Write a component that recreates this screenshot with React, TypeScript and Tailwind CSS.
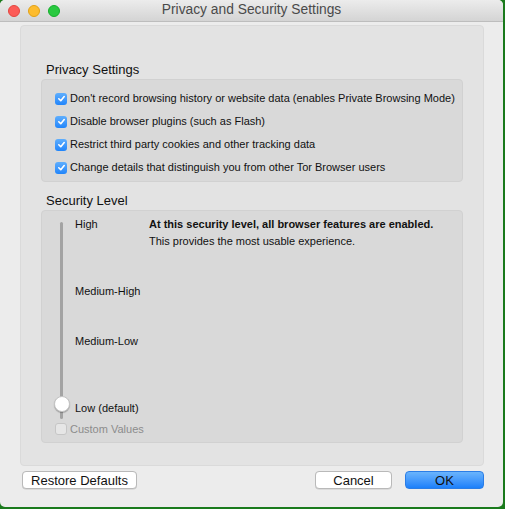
import React from 'react';

const font = { fontFamily: '"Liberation Sans", Arial, sans-serif' };

const Check = ({ checked, disabled }: { checked?: boolean; disabled?: boolean }) =>
  checked ? (
    <span className="w-[12px] h-[12px] rounded-[3px] bg-gradient-to-b from-[#5eaefd] to-[#1f85fb] flex items-center justify-center shrink-0">
      <svg width="9" height="9" viewBox="0 0 10 10">
        <path d="M2 5.3 L4.2 7.4 L8 2.8" fill="none" stroke="white" strokeWidth={1.8} strokeLinecap="round" strokeLinejoin="round" />
      </svg>
    </span>
  ) : (
    <span
      className={`w-[12px] h-[12px] rounded-[3px] border shrink-0 ${
        disabled ? 'border-[#c6c6c6] bg-[#e6e6e6]' : 'border-[#aaa] bg-white'
      }`}
    />
  );

const privacyItems = [
  "Don't record browsing history or website data (enables Private Browsing Mode)",
  'Disable browser plugins (such as Flash)',
  'Restrict third party cookies and other tracking data',
  'Change details that distinguish you from other Tor Browser users',
];

const MacButton = ({ label, primary, className }: { label: string; primary?: boolean; className?: string }) => (
  <button
    className={`h-[18px] rounded-[4px] text-[13px] leading-none text-[#111] flex items-center justify-center ${
      primary
        ? 'bg-gradient-to-b from-[#6ab4fc] to-[#1a7ffa] border border-[#2b7de6]'
        : 'bg-white border border-[#b9b9b9] shadow-[0_0.5px_0.5px_rgba(0,0,0,0.15)]'
    } ${className ?? ''}`}
  >
    {label}
  </button>
);

export default function App() {
  return (
    <div className="w-[505px] h-[509px] bg-[#1a7a1c]" style={font}>
      <div className="w-[503px] h-[507px] rounded-[5px] overflow-hidden bg-[#ececec] flex flex-col">
        {/* title bar */}
        <div className="h-[22px] shrink-0 bg-gradient-to-b from-[#ececec] to-[#d4d4d4] border-b border-[#bdbdbd] relative flex items-center justify-center">
          <div className="absolute left-[8px] top-[5px] flex gap-[8px]">
            <span className="w-[12px] h-[12px] rounded-full bg-[#fc5b57] border border-[#e2463f]" />
            <span className="w-[12px] h-[12px] rounded-full bg-[#fdbc2e] border border-[#e1a116]" />
            <span className="w-[12px] h-[12px] rounded-full bg-[#29c940] border border-[#14ae2b]" />
          </div>
          <span className="text-[13.8px] text-[#4a4a4a]">Privacy and Security Settings</span>
        </div>

        {/* main panel */}
        <div className="ml-[20px] mt-[3px] w-[464px] h-[441px] rounded-[4px] bg-[#e3e3e3] border border-[#dadada] px-[20px] pt-[36px]">
          <div className="text-[13px] leading-[16px] text-[#111] pl-[5px] mb-[1px]">Privacy Settings</div>
          <div className="rounded-[4px] bg-[#d9d9d9] border border-[#d1d1d1] pt-[7px] pb-[2px] pl-[13px]">
            {privacyItems.map((t) => (
              <div key={t} className="h-[23px] flex items-center gap-[3px]">
                <Check checked />
                <span className="text-[11px] text-[#111] whitespace-nowrap">{t}</span>
              </div>
            ))}
          </div>

          <div className="text-[13px] leading-[16px] text-[#111] pl-[5px] mt-[11px] mb-[1px]">Security Level</div>
          <div className="rounded-[4px] bg-[#d9d9d9] border border-[#d1d1d1] h-[233px] pl-[12px] pt-[5px]">
            <div className="flex">
              {/* slider */}
              <div className="w-[16px] h-[197px] relative shrink-0 mt-[6px]">
                <div className="absolute left-[6px] top-0 bottom-0 w-[3px] bg-[#a3a3a3] rounded-full" />
                <div className="absolute left-0 top-[174px] w-[16px] h-[16px] rounded-full bg-white border border-[#c4c4c4] shadow-[0_1px_1px_rgba(0,0,0,0.25)]" />
              </div>
              <div className="ml-[5px] w-[74px] flex flex-col text-[11px] text-[#111] shrink-0">
                <div className="h-[17px] flex items-center">High</div>
                <div className="h-[17px] mt-[50px] flex items-center">Medium-High</div>
                <div className="h-[17px] mt-[33px] flex items-center">Medium-Low</div>
                <div className="h-[17px] mt-[50px] flex items-center whitespace-nowrap">Low (default)</div>
              </div>
              <div className="text-[11px] text-[#111]">
                <div className="h-[17px] flex items-center font-bold whitespace-nowrap">At this security level, all browser features are enabled.</div>
                <div className="h-[17px] flex items-center whitespace-nowrap">This provides the most usable experience.</div>
              </div>
            </div>
            <div className="flex items-center gap-[3px] mt-[2px] ml-[1px]">
              <Check disabled />
              <span className="text-[11px] text-[#8c8c8c]">Custom Values</span>
            </div>
          </div>
        </div>

        {/* buttons */}
        <div className="flex items-center mt-[5px] pl-[22px] pr-[19px]">
          <MacButton label="Restore Defaults" className="w-[115px]" />
          <div className="flex-1" />
          <MacButton label="Cancel" className="w-[77px]" />
          <MacButton label="OK" primary className="w-[79px] ml-[13px]" />
        </div>
      </div>
    </div>
  );
}
